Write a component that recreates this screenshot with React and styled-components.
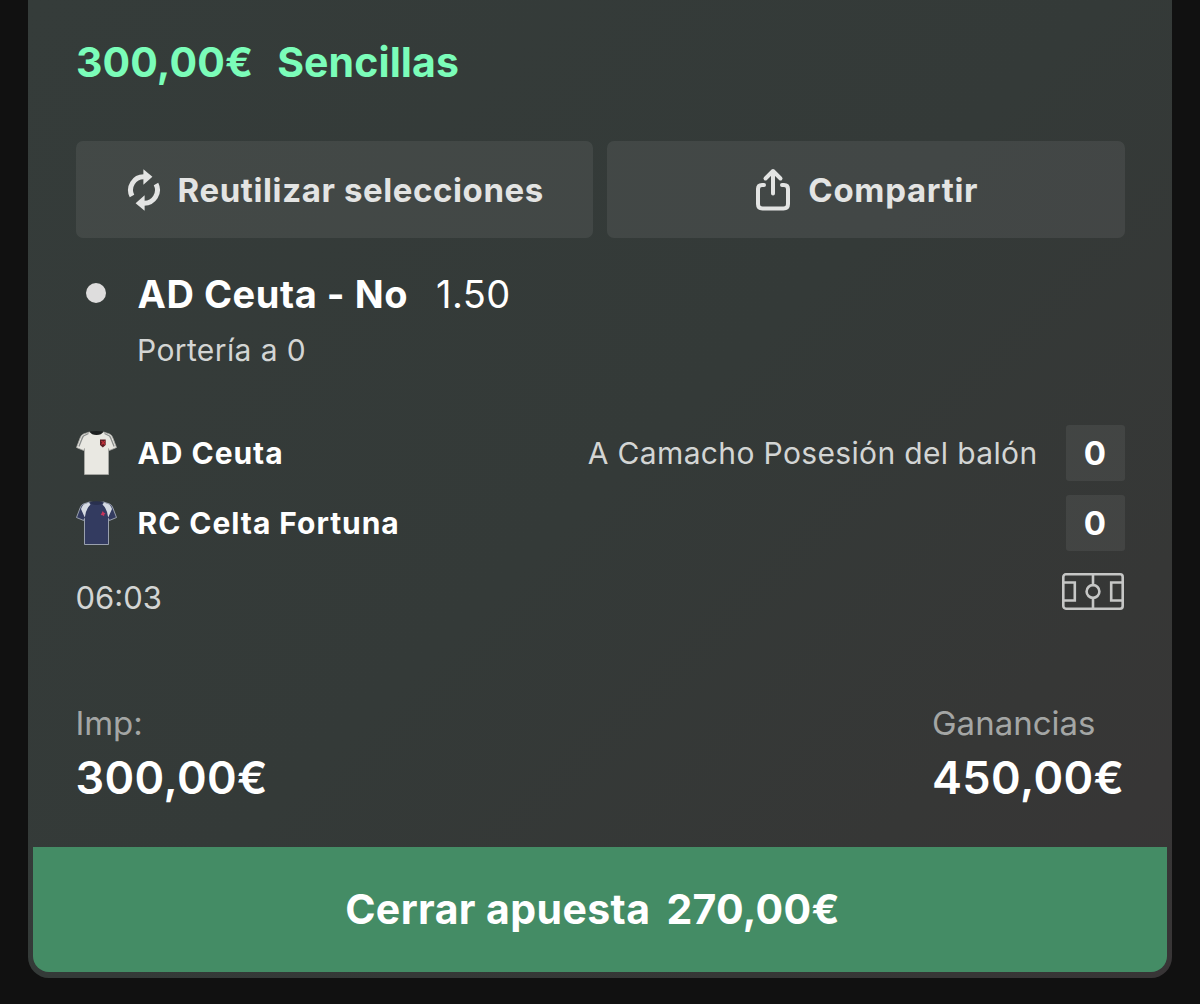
import React from "react";
import styled, { createGlobalStyle } from "styled-components";

const GlobalStyle = createGlobalStyle`
    * {
        box-sizing: border-box;
    }

    body {
        margin: 0;
        background: #111111;
        font-family: Inter, "Liberation Sans", sans-serif;
        -webkit-font-smoothing: antialiased;
    }
`;

const bet = {
    stake: "300,00€",
    type: "Sencillas",
    selection: "AD Ceuta - No",
    odds: "1.50",
    market: "Portería a 0",
    clock: "06:03",
    returns: "450,00€",
    cashOut: "270,00€",
};

const ReuseIcon = () => (
    <svg width="34" height="44" viewBox="0 0 34 44" fill="none">
        <path d="M5 28 A13.2 13.2 0 0 1 17 8.8" stroke="#e3e4e3" strokeWidth="5" />
        <path d="M16.4 1.2 L25.4 8.8 L16.4 16.8 Z" fill="#e3e4e3" />
        <path d="M29 16 A13.2 13.2 0 0 1 17 35.2" stroke="#e3e4e3" strokeWidth="5" />
        <path d="M17.6 27.2 L8.6 35.2 L17.6 42.8 Z" fill="#e3e4e3" />
    </svg>
);

const ShareIcon = () => (
    <svg width="36" height="44" viewBox="0 0 36 44" fill="none" stroke="#e3e4e3" strokeWidth="4" strokeLinecap="round" strokeLinejoin="round">
        <path d="M9 17 H7 Q3 17 3 21 V36 Q3 40.5 7.5 40.5 H28.5 Q33 40.5 33 36 V21 Q33 17 29 17 H27" />
        <path d="M18 25.5 V3.5 M10.5 10.5 L18 3 L25.5 10.5" />
    </svg>
);

const CeutaShirt = () => (
    <svg width="41" height="46" viewBox="0.5 0 41 46">
        <path d="M14 2 L8 4 Q5.5 5 4.6 8 L1 17.5 L8.2 20.5 L9 18.5 V44.5 H33 V18.5 L33.8 20.5 L41 17.5 L37.4 8 Q36.5 5 34 4 L28 2 Q21 6 14 2 Z" fill="#e9e8e2" stroke="#a9aaa6" strokeWidth="0.8" />
        <path d="M13 3.5 L8 6 Q7 7 6 10 L3.4 16.5 M29 3.5 L34 6 Q35 7 36 10 L38.6 16.5" fill="none" stroke="#8b8e8d" strokeWidth="1.3" />
        <path d="M14 1.5 Q21 0.5 28 1.5 Q26 5 21 5 Q16 5 14 1.5 Z" fill="#1d2020" />
        <path d="M24.5 9.5 H30.2 V15 L27.3 17.5 L24.5 15 Z" fill="#5b1f25" />
        <path d="M26 11 L29.5 14.5 M29.5 11 L26 14.5" stroke="#c5303a" strokeWidth="1.2" />
    </svg>
);

const CeltaShirt = () => (
    <svg width="41" height="46" viewBox="0.5 0 41 46">
        <path d="M14 2 L8 4 Q5.5 5 4.6 8 L1 17.5 L8.2 20.5 L9 18.5 V44.5 H33 V18.5 L33.8 20.5 L41 17.5 L37.4 8 Q36.5 5 34 4 L28 2 Q21 4 14 2 Z" fill="#333b60" stroke="#a5abb8" strokeWidth="0.9" />
        <path d="M13.5 2.6 L8 4.6 Q6.5 6.5 5.5 9 L9.3 17.5 Q10 9.5 15 4.6 Z" fill="#d5dae2" />
        <path d="M28.5 2.6 L34 4.6 Q35.5 6.5 36.5 9 L32.7 17.5 Q32 9.5 27 4.6 Z" fill="#d5dae2" />
        <path d="M14 1.8 Q21 0.8 28 1.8 Q26 5 21 5 Q16 5 14 1.8 Z" fill="#29304f" />
        <path d="M27.3 11 L28.4 12.8 L30 13.2 L28.8 14.5 L28.6 16.2 L27 15.3 L25.2 15 L26 13.5 Z" fill="#c8345c" />
    </svg>
);

const PitchIcon = () => (
    <svg width="62" height="37" viewBox="0 0 62 37" fill="none" stroke="#c6c7c6" strokeWidth="2.6">
        <rect x="1.3" y="1.3" width="59.4" height="34.4" rx="2.6" />
        <path d="M2 9.5 H12.8 V27.5 H2 M60 9.5 H49.2 V27.5 H60 M31 1 V12 M31 25 V36" />
        <circle cx="31" cy="18.5" r="6.4" />
    </svg>
);

const teams = [
    { name: "AD Ceuta", score: 0, Shirt: CeutaShirt, event: "A Camacho Posesión del balón" },
    { name: "RC Celta Fortuna", score: 0, Shirt: CeltaShirt },
];

const App = () => {
    return <>
        <GlobalStyle />
        <Page>
            <Card>
                <Content>
                    <Header>
                        <Text $size={41} $weight={650} $spacing="0.1px" $color="#7bfdb9">{bet.stake}</Text>
                        <Text $size={41} $weight={650} $spacing="0.1px" $color="#7bfdb9">{bet.type}</Text>
                    </Header>

                    <Actions>
                        <ActionButton $gap={17}>
                            <ReuseIcon />
                            <Text $size={33} $weight={670} $spacing="0.6px" $color="#e3e4e3">Reutilizar selecciones</Text>
                        </ActionButton>
                        <ActionButton $gap={17}>
                            <ShareIcon />
                            <Text $size={33} $weight={670} $spacing="0.7px" $color="#e3e4e3">Compartir</Text>
                        </ActionButton>
                    </Actions>

                    <Selection>
                        <Bullet />
                        <Text $size={38} $weight={700} $spacing="0.55px">{bet.selection}</Text>
                        <Odds $size={38} $weight={380} $spacing="0.4px">{bet.odds}</Odds>
                    </Selection>
                    <Market $size={30} $weight={370} $spacing="0.4px" $color="#d3d5d4">{bet.market}</Market>

                    <Teams>
                        {teams.map(({ name, score, Shirt, event }) => (
                            <TeamRow key={name}>
                                <Shirt />
                                <TeamName $size={30} $weight={660} $spacing="0.95px">{name}</TeamName>
                                {event && <Text $size={30} $weight={370} $spacing="0.35px" $color="#d3d5d4">{event}</Text>}
                                <Score>{score}</Score>
                            </TeamRow>
                        ))}
                    </Teams>

                    <MatchInfo>
                        <Clock $size={31} $weight={370} $spacing="0px" $color="#d3d5d4">{bet.clock}</Clock>
                        <PitchIcon />
                    </MatchInfo>

                    <Totals>
                        <Total>
                            <Text $size={33} $weight={400} $spacing="-0.1px" $color="#a4a6a5">Imp:</Text>
                            <Text $size={45} $weight={640} $spacing="0.4px">{bet.stake}</Text>
                        </Total>
                        <Total>
                            <Text $size={33} $weight={400} $spacing="0px" $color="#a4a6a5">Ganancias</Text>
                            <Text $size={45} $weight={640} $spacing="0.4px">{bet.returns}</Text>
                        </Total>
                    </Totals>
                </Content>

                <CashOut>
                    <Text $size={41} $weight={700} $spacing="0.4px">Cerrar apuesta</Text>
                    <Text $size={41} $weight={680} $spacing="0.3px">{bet.cashOut}</Text>
                </CashOut>
            </Card>
        </Page>
    </>;
};

const Page = styled.main`
    height: 1004px;
    padding: 0 28px;
    overflow: hidden;
`

const Card = styled.section`
    height: 977.5px;
    padding: 0 5px 5.5px;
    border-radius: 0 0 21px 21px;
    background: linear-gradient(136deg, #353c3a 0%, #343a38 50%, #363736 80%, #383536 100%);
`

const Content = styled.div`
    height: 847px;
    padding: 38px 42.5px 0 42.5px;
`

const Text = styled.span`
    font-size: ${props => props.$size}px;
    font-weight: ${props => props.$weight};
    letter-spacing: ${props => props.$spacing};
    color: ${props => props.$color || "#ffffff"};
    white-space: nowrap;
`

const Header = styled.header`
    display: flex;
    align-items: center;
    gap: 24px;
    height: 48px;
    padding-left: 0.5px;
`

const Actions = styled.div`
    display: grid;
    grid-template-columns: 1fr 1fr;
    gap: 14px;
    margin-top: 55px;
`

const ActionButton = styled.button`
    display: flex;
    align-items: center;
    justify-content: center;
    gap: ${props => props.$gap}px;
    height: 97px;
    padding: 0 0 0 2px;
    border: none;
    border-radius: 7px;
    background: rgba(255, 255, 255, 0.07);
    font-family: inherit;
`

const Selection = styled.div`
    display: flex;
    align-items: center;
    height: 48px;
    margin-top: 32px;
`

const Bullet = styled.i`
    width: 20px;
    height: 20px;
    margin: 0 32px 3px 10px;
    border-radius: 50%;
    background: #dedddd;
`

const Odds = styled(Text)`
    margin-left: 28px;
`

const Market = styled(Text)`
    display: block;
    height: 40px;
    margin-top: 12px;
    padding-left: 61.5px;
    line-height: 40px;
`

const Teams = styled.div`
    display: grid;
    gap: 14px;
    margin-top: 55px;
`

const TeamRow = styled.div`
    display: flex;
    align-items: center;
    height: 56px;
`

const TeamName = styled(Text)`
    flex: 1;
    margin: 0 0 1px 21px;
`

const Score = styled.div`
    width: 59px;
    height: 56px;
    margin-left: 28px;
    border-radius: 3px;
    background: rgba(255, 255, 255, 0.065);
    color: #ffffff;
    font-size: 33px;
    font-weight: 700;
    line-height: 56px;
    text-align: center;
`

const MatchInfo = styled.div`
    display: flex;
    justify-content: space-between;
    height: 50px;
    margin-top: 22px;
    padding-right: 0.5px;
`

const Clock = styled(Text)`
    line-height: 50px;
`

const Totals = styled.div`
    display: flex;
    justify-content: space-between;
    margin-top: 80px;
`

const Total = styled.div`
    display: grid;
    grid-template-rows: 40px 50px;
    row-gap: 9px;
    align-items: center;
`

const CashOut = styled.button`
    display: flex;
    align-items: center;
    justify-content: center;
    gap: 16px;
    width: 100%;
    height: 125px;
    padding: 0 15px 2px 0;
    border: none;
    border-radius: 0 0 16px 16px;
    background: #448c65;
    font-family: inherit;
`

export default App;
